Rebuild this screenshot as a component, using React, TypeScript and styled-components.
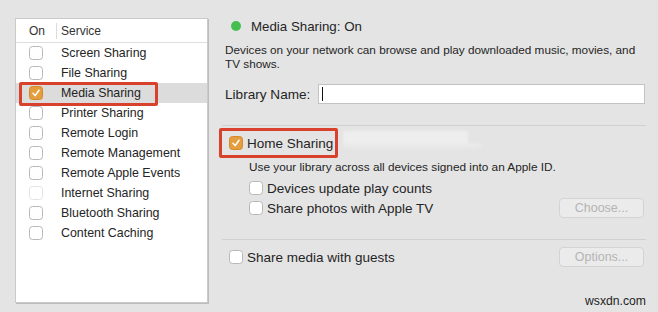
import React from 'react';
import styled, { createGlobalStyle } from 'styled-components';

const GlobalStyle = createGlobalStyle`
  html, body {
    margin: 0;
    padding: 0;
    background: #e4e4e4;
  }
  body {
    font-family: "Liberation Sans", Arial, sans-serif;
    color: #242424;
  }
`;

const Page = styled.div`
  position: relative;
  width: 658px;
  height: 312px;
  box-sizing: border-box;
  padding: 18px 0 0 15px;
  display: flex;
  gap: 14px;
  overflow: hidden;
`;

/* ---------- service list ---------- */

const ListPanel = styled.div`
  width: 193px;
  height: 285px;
  box-sizing: border-box;
  background: #fff;
  border: 1px solid #cacaca;
  box-shadow: 1px 1px 0 #bcbcbc;
  flex: none;
`;

const ListHeader = styled.div`
  height: 23px;
  display: flex;
  align-items: center;
  border-bottom: 1px solid #dedede;
  font-size: 12px;
  color: #333;
`;

const OnHead = styled.div`
  width: 41px;
  padding-left: 13px;
  box-sizing: border-box;
  border-right: 1px solid #dcdcdc;
  line-height: 16px;
`;

const ServiceHead = styled.div`
  padding-left: 4px;
`;

const Row = styled.div<{ $selected?: boolean }>`
  position: relative;
  height: 20px;
  display: flex;
  align-items: center;
  font-size: 12.4px;
  background: ${p => (p.$selected ? '#dcdcdc' : 'transparent')};
`;

const CheckCell = styled.div`
  width: 45px;
  padding-left: 13px;
  box-sizing: border-box;
  display: flex;
`;

const Highlight = styled.div`
  position: absolute;
  left: 3px;
  top: -1px;
  width: 139px;
  height: 24px;
  box-sizing: border-box;
  border: 3px solid #d8412c;
  border-radius: 2px;
  pointer-events: none;
`;

/* ---------- checkbox ---------- */

const Box = styled.span<{ $checked?: boolean; $dim?: boolean }>`
  width: 14px;
  height: 14px;
  box-sizing: border-box;
  border-radius: 3.5px;
  border: 1px solid
    ${p => (p.$checked ? '#d48a2c' : p.$dim ? '#e3e3e3' : '#b8b8b8')};
  background: ${p => (p.$checked ? '#e59e3e' : '#fff')};
  display: inline-flex;
  align-items: center;
  justify-content: center;
  flex: none;
`;

const Check: React.FC<{ checked?: boolean; dim?: boolean }> = ({ checked, dim }) => (
  <Box $checked={checked} $dim={dim}>
    {checked && (
      <svg width="10" height="10" viewBox="0 0 10 10">
        <polyline
          points="2,5.2 4.2,7.6 8,2.2"
          fill="none"
          stroke="#fff"
          strokeWidth="1.5"
          strokeLinecap="round"
          strokeLinejoin="round"
        />
      </svg>
    )}
  </Box>
);

/* ---------- settings side ---------- */

const Side = styled.div`
  width: 424px;
  display: flex;
  flex-direction: column;
  flex: none;
`;

const Status = styled.div`
  height: 16px;
  display: flex;
  align-items: center;
  font-size: 13.3px;
`;

const Dot = styled.span`
  width: 10px;
  height: 10px;
  border-radius: 50%;
  background: #44bf4f;
  margin: 0 10px 0 9px;
`;

const Description = styled.p`
  margin: 9px 0 0;
  padding-left: 3px;
  font-size: 11.75px;
  line-height: 14px;
  white-space: nowrap;
`;

const FieldRow = styled.div`
  margin-top: 13px;
  height: 20px;
  display: flex;
  align-items: center;
`;

const FieldLabel = styled.label`
  width: 96px;
  padding-left: 3px;
  box-sizing: border-box;
  font-size: 13.6px;
`;

const TextField = styled.div`
  width: 327px;
  height: 20px;
  box-sizing: border-box;
  background: #fff;
  border: 1px solid #c3c3c3;
  display: flex;
  align-items: center;
  padding-left: 3px;
`;

const Caret = styled.span`
  width: 1px;
  height: 14px;
  background: #111;
`;

const Separator = styled.div<{ $top: number }>`
  margin-top: ${p => p.$top}px;
  height: 1px;
  background: #d0d0d0;
  width: 424px;
`;

const HomeBox = styled.div`
  margin: 2px 0 0 -3px;
  width: 119px;
  height: 30px;
  box-sizing: border-box;
  border: 3px solid #d8412c;
  border-radius: 2px;
  display: flex;
  align-items: center;
  gap: 4px;
  padding-left: 7px;
  font-size: 13.5px;
  white-space: nowrap;
`;

const HomeLine = styled.div`
  display: flex;
  align-items: flex-start;
`;

const Redacted = styled.div`
  margin: 5px 0 0 5px;
  width: 138px;
  height: 17px;
  position: relative;
  filter: blur(1.5px);
  &::before,
  &::after {
    content: '';
    position: absolute;
    left: 0;
  }
  &::before {
    top: 0;
    width: 125px;
    height: 12px;
    background: #eeeeee;
  }
  &::after {
    top: 12px;
    width: 138px;
    height: 5px;
    background: #eaeaea;
  }
`;

const Hint = styled.p`
  margin: 2px 0 0;
  padding-left: 27px;
  font-size: 11.8px;
  line-height: 14px;
`;

const OptionRow = styled.label<{ $indent: number; $top?: number }>`
  margin-top: ${p => p.$top ?? 0}px;
  height: 20px;
  display: flex;
  align-items: center;
  padding-left: ${p => p.$indent}px;
  font-size: 13.5px;
`;

const OptionText = styled.span`
  margin-left: 4px;
`;

const PushButton = styled.button`
  margin-left: auto;
  margin-right: 2px;
  width: 85px;
  height: 20px;
  box-sizing: border-box;
  background: #ebebeb;
  border: 1px solid #d3d3d3;
  border-radius: 4px;
  font-family: inherit;
  font-size: 12.5px;
  color: #b4b4b4;
  padding: 0;
`;

const Watermark = styled.div`
  position: absolute;
  right: 12px;
  bottom: 4px;
  font-size: 12.2px;
  color: #1e1e1e;
`;

const services = [
  'Screen Sharing',
  'File Sharing',
  'Media Sharing',
  'Printer Sharing',
  'Remote Login',
  'Remote Management',
  'Remote Apple Events',
  'Internet Sharing',
  'Bluetooth Sharing',
  'Content Caching',
];

const App: React.FC = () => (
  <>
    <GlobalStyle />
    <Page>
      <ListPanel>
        <ListHeader>
          <OnHead>On</OnHead>
          <ServiceHead>Service</ServiceHead>
        </ListHeader>
        {services.map(name => {
          const selected = name === 'Media Sharing';
          return (
            <Row key={name} $selected={selected}>
              <CheckCell>
                <Check checked={selected} dim={name === 'Internet Sharing'} />
              </CheckCell>
              {name}
              {selected && <Highlight />}
            </Row>
          );
        })}
      </ListPanel>

      <Side>
        <Status>
          <Dot />
          Media Sharing: On
        </Status>
        <Description>
          Devices on your network can browse and play downloaded music, movies, and
          <br />
          TV shows.
        </Description>
        <FieldRow>
          <FieldLabel>Library Name:</FieldLabel>
          <TextField>
            <Caret />
          </TextField>
        </FieldRow>

        <Separator $top={21} />
        <HomeLine>
          <HomeBox>
            <Check checked />
            Home Sharing
          </HomeBox>
          <Redacted />
        </HomeLine>
        <Hint>Use your library across all devices signed into an Apple ID.</Hint>
        <OptionRow $indent={27} $top={4}>
          <Check />
          <OptionText>Devices update play counts</OptionText>
        </OptionRow>
        <OptionRow $indent={27}>
          <Check />
          <OptionText>Share photos with Apple TV</OptionText>
          <PushButton>Choose...</PushButton>
        </OptionRow>

        <Separator $top={21} />
        <OptionRow $indent={7} $top={7}>
          <Check />
          <OptionText>Share media with guests</OptionText>
          <PushButton>Options...</PushButton>
        </OptionRow>
      </Side>
      <Watermark>wsxdn.com</Watermark>
    </Page>
  </>
);

export default App;
